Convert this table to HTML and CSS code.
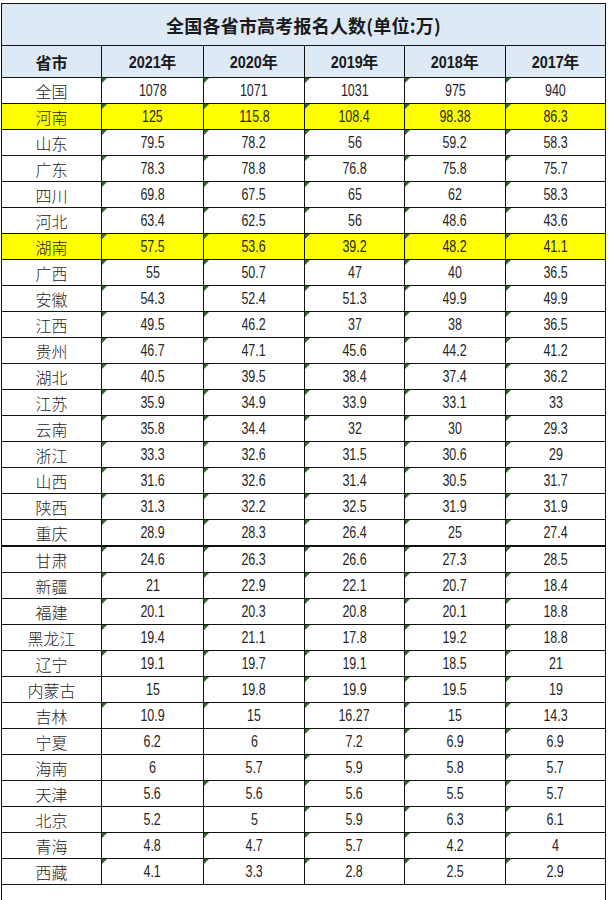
FILE: index.html
```html
<!DOCTYPE html>
<html lang="zh-CN">
<head>
<meta charset="utf-8">
<title>全国各省市高考报名人数</title>
<link rel="stylesheet" href="styles.css">
</head>
<body>
<table class="sheet">
  <colgroup>
    <col class="c-name"><col class="c1"><col class="c2"><col class="c3"><col class="c4"><col class="c5">
  </colgroup>
  <tbody id="body">
    <tr class="title-row"><td colspan="6">全国各省市高考报名人数(单位:万)</td></tr>
    <tr class="head-row">
      <td>省市</td><td><span class="hn">2021</span>年</td><td><span class="hn">2020</span>年</td><td><span class="hn">2019</span>年</td><td><span class="hn">2018</span>年</td><td><span class="hn">2017</span>年</td>
    </tr>
  </tbody>
</table>
<script src="app.js"></script>
</body>
</html>
```

FILE: app.js
```js
var rows = [
  ["全国","1078","1071","1031","975","940"],
  ["河南","125","115.8","108.4","98.38","86.3","y"],
  ["山东","79.5","78.2","56","59.2","58.3"],
  ["广东","78.3","78.8","76.8","75.8","75.7"],
  ["四川","69.8","67.5","65","62","58.3"],
  ["河北","63.4","62.5","56","48.6","43.6"],
  ["湖南","57.5","53.6","39.2","48.2","41.1","y"],
  ["广西","55","50.7","47","40","36.5"],
  ["安徽","54.3","52.4","51.3","49.9","49.9"],
  ["江西","49.5","46.2","37","38","36.5"],
  ["贵州","46.7","47.1","45.6","44.2","41.2"],
  ["湖北","40.5","39.5","38.4","37.4","36.2"],
  ["江苏","35.9","34.9","33.9","33.1","33"],
  ["云南","35.8","34.4","32","30","29.3"],
  ["浙江","33.3","32.6","31.5","30.6","29"],
  ["山西","31.6","32.6","31.4","30.5","31.7"],
  ["陕西","31.3","32.2","32.5","31.9","31.9"],
  ["重庆","28.9","28.3","26.4","25","27.4"],
  ["甘肃","24.6","26.3","26.6","27.3","28.5","s"],
  ["新疆","21","22.9","22.1","20.7","18.4"],
  ["福建","20.1","20.3","20.8","20.1","18.8"],
  ["黑龙江","19.4","21.1","17.8","19.2","18.8"],
  ["辽宁","19.1","19.7","19.1","18.5","21"],
  ["内蒙古","15","19.8","19.9","19.5","19"],
  ["吉林","10.9","15","16.27","15","14.3"],
  ["宁夏","6.2","6","7.2","6.9","6.9"],
  ["海南","6","5.7","5.9","5.8","5.7"],
  ["天津","5.6","5.6","5.6","5.5","5.7"],
  ["北京","5.2","5","5.9","6.3","6.1"],
  ["青海","4.8","4.7","5.7","4.2","4"],
  ["西藏","4.1","3.3","2.8","2.5","2.9"]
];
// cells without the green "number stored as text" marker: [row name, column index]
var noMark = {
  "内蒙古": [1], "宁夏": [1, 2], "海南": [1, 2], "天津": [1], "北京": [1, 2]
};
var tb = document.getElementById("body");
rows.forEach(function (r) {
  var tr = document.createElement("tr");
  tr.className = "data-row" + (r[6] === "y" ? " hl" : "") + (r[6] === "s" ? " sep" : "");
  var name = document.createElement("td");
  name.className = "name";
  name.textContent = r[0];
  tr.appendChild(name);
  for (var i = 1; i <= 5; i++) {
    var td = document.createElement("td");
    var skip = noMark[r[0]] && noMark[r[0]].indexOf(i) >= 0;
    td.className = "num" + (skip ? "" : " mark");
    var s = document.createElement("span");
    s.className = "n";
    s.textContent = r[i];
    td.appendChild(s);
    tr.appendChild(td);
  }
  tb.appendChild(tr);
});
var foot = document.createElement("tr");
foot.className = "foot-row";
var ft = document.createElement("td");
ft.colSpan = 6;
foot.appendChild(ft);
tb.appendChild(foot);
```

FILE: styles.css
```css
html, body {
  margin: 0;
  background: #ffffff;
}
body {
  padding: 3px 0 0 1px;
  font-family: "Liberation Sans", "Noto Sans CJK SC", sans-serif;
  color: #262626;
  overflow: hidden;
}
.sheet {
  border-collapse: collapse;
  table-layout: fixed;
  width: 604px;
}
.c-name { width: 100px; }
.c1 { width: 102px; }
.c2 { width: 101px; }
.c3 { width: 100px; }
.c4 { width: 101px; }
.c5 { width: 100px; }

.sheet td {
  border: 1px solid #111;
  text-align: center;
  padding: 0;
  font-size: 16px;
  line-height: 18px;
}
.title-row td {
  height: 41px;
  background: #dde9f5;
  font-family: "Noto Sans CJK SC", sans-serif;
  font-weight: 700;
  font-size: 18px;
  letter-spacing: 0.2px;
  color: #1a1a1a;
}
.head-row td {
  height: 31px;
  background: #dde9f5;
  font-family: "Noto Sans CJK SC", sans-serif;
  font-weight: 700;
  font-size: 16px;
  color: #1a1a1a;
}
.hn {
  font-family: "Liberation Sans", sans-serif;
  font-weight: 700;
  display: inline-block;
  transform: scaleX(0.9);
  margin: 0 -2px;
}
.data-row td {
  height: 25px;
}
.data-row.hl td {
  background: #ffff00;
}
.data-row.sep td {
  border-top: 2px solid #111;
}
.name {
  font-family: "Noto Sans CJK SC", sans-serif;
  font-weight: 300;
  font-size: 16px;
}
.num {
  position: relative;
}
.n {
  display: inline-block;
  font-family: "Liberation Sans", sans-serif;
  font-size: 16px;
  transform: scaleX(0.78);
}
.mark::before {
  content: "";
  position: absolute;
  left: 0;
  top: 0;
  border-top: 5px solid #2f6b2a;
  border-right: 5px solid transparent;
}
.foot-row td {
  height: 40px;
}
```
